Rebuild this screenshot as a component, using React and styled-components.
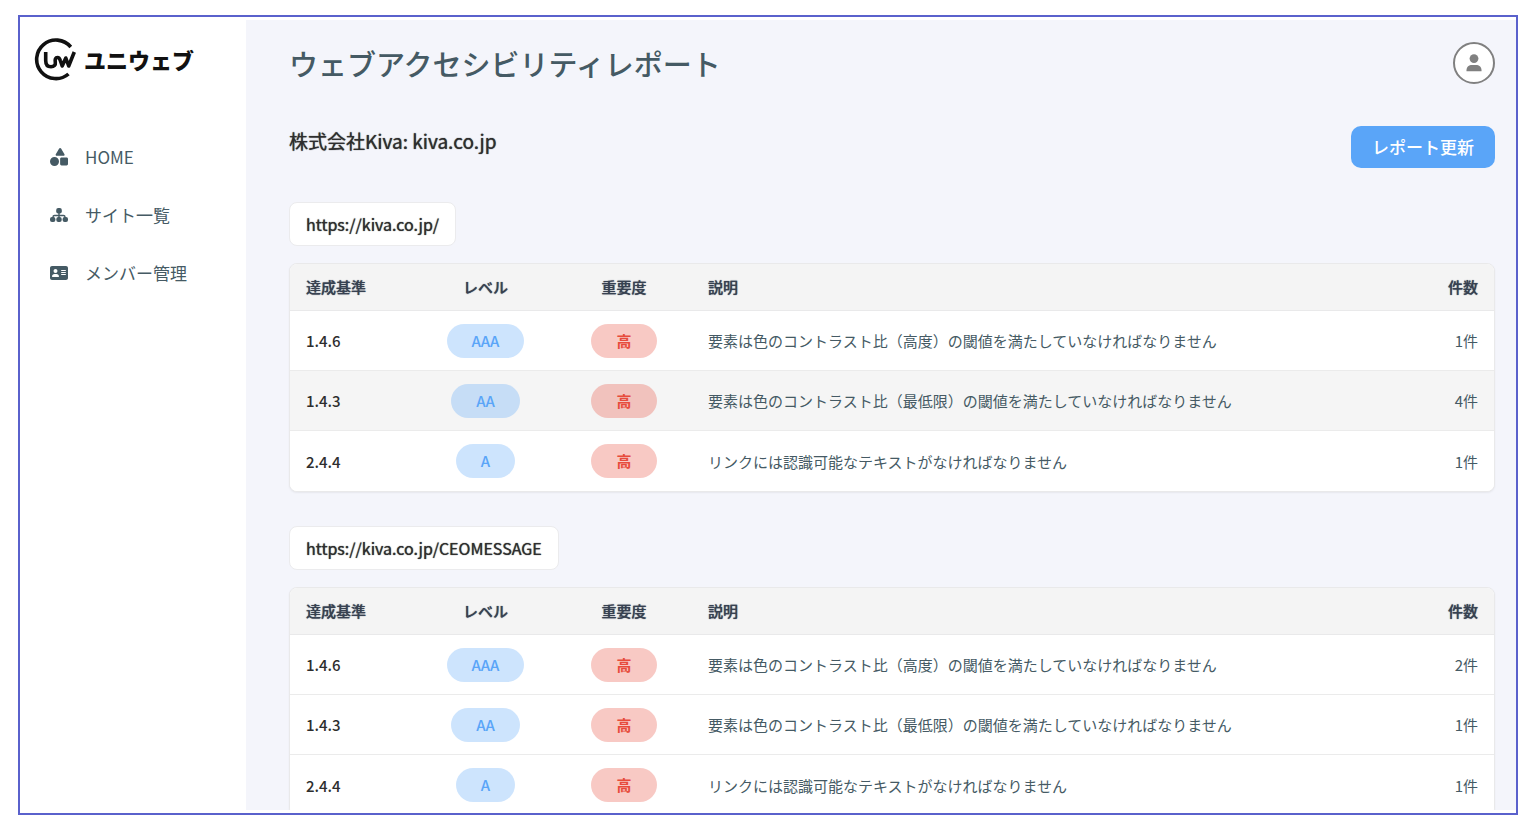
import React from 'react';
import styled, { createGlobalStyle } from 'styled-components';
import { FaShapes, FaAddressCard } from 'react-icons/fa6';

const GlobalStyle = createGlobalStyle`
  * {
    box-sizing: border-box;
  }

  body {
    margin: 0;
    background: #fff;
    font-family: 'Noto Sans CJK JP', sans-serif;
    color: #2e2e2e;
  }
`;

const reports = [
  {
    url: 'https://kiva.co.jp/',
    rows: [
      { criterion: '1.4.6', level: 'AAA', severity: '高', text: '要素は色のコントラスト比（高度）の閾値を満たしていなければなりません', count: 1 },
      { criterion: '1.4.3', level: 'AA', severity: '高', text: '要素は色のコントラスト比（最低限）の閾値を満たしていなければなりません', count: 4, active: true },
      { criterion: '2.4.4', level: 'A', severity: '高', text: 'リンクには認識可能なテキストがなければなりません', count: 1 },
    ],
  },
  {
    url: 'https://kiva.co.jp/CEOMESSAGE',
    rows: [
      { criterion: '1.4.6', level: 'AAA', severity: '高', text: '要素は色のコントラスト比（高度）の閾値を満たしていなければなりません', count: 2 },
      { criterion: '1.4.3', level: 'AA', severity: '高', text: '要素は色のコントラスト比（最低限）の閾値を満たしていなければなりません', count: 1 },
      { criterion: '2.4.4', level: 'A', severity: '高', text: 'リンクには認識可能なテキストがなければなりません', count: 1 },
    ],
  },
];

const LogoMark = () => (
  <svg width="43" height="44" viewBox="0 0 43 44" fill="none" stroke="#111" strokeWidth="3.6" aria-hidden="true">
    <path d="M36.800 10A19.300 19.300 0 1 0 34.500 37" />
    <path
      d="M11.700 15v8.500C11.700 27.500 13.500 29.800 17 29.800c3 0 4.800-1.800 4.300-4.600-.5-3 .2-4.700 2.200-4.700 1.700 0 2.300 1.300 2.800 3l1.900 5.500 3.600-8 2.900 8L40.300 15"
      strokeLinejoin="round"
    />
  </svg>
);

const SitemapIcon = () => (
  <svg width="18" height="18" viewBox="0 0 18 18" fill="currentColor" aria-hidden="true">
    <rect x="6.200" y="2" width="5.600" height="5.400" rx="2" />
    <path d="M9 6v6M3 13V11Q3 9.500 4.500 9.500h9Q15 9.500 15 11V13" fill="none" stroke="currentColor" strokeWidth="1.400" />
    <rect x="0" y="11" width="5.400" height="5" rx="2" />
    <rect x="6.300" y="11" width="5.400" height="5" rx="2" />
    <rect x="12.600" y="11" width="5.400" height="5" rx="2" />
  </svg>
);

const UserIcon = () => (
  <svg width="16" height="18" viewBox="0 0 16 18" fill="#808080" aria-hidden="true">
    <circle cx="8" cy="4.600" r="4.400" />
    <path d="M.5 17.300v-1C.5 12.800 3 11 6 11h4c3 0 5.500 1.800 5.500 5.300v1z" />
  </svg>
);

const Report = ({ url, rows }) => (
  <Section>
    <UrlTag>{url}</UrlTag>
    <TableCard>
      <Table>
        <colgroup>
          <Col $width={125} />
          <Col $width={141} />
          <Col $width={136} />
          <col />
          <Col $width={100} />
        </colgroup>
        <thead>
          <tr>
            <Th>達成基準</Th>
            <Th $align="center">レベル</Th>
            <Th $align="center">重要度</Th>
            <Th>説明</Th>
            <Th $align="right">件数</Th>
          </tr>
        </thead>
        <tbody>
          {rows.map((row) => (
            <Row key={row.criterion} $active={row.active}>
              <Td $strong>{row.criterion}</Td>
              <Td $align="center">
                <Badge>{row.level}</Badge>
              </Td>
              <Td $align="center">
                <Badge $danger>{row.severity}</Badge>
              </Td>
              <Td>{row.text}</Td>
              <Td $align="right">{row.count}件</Td>
            </Row>
          ))}
        </tbody>
      </Table>
    </TableCard>
  </Section>
);

const App = () => (
  <Page>
    <GlobalStyle />
    <Frame>
      <Sidebar>
        <Logo href="#">
          <LogoMark />
          ユニウェブ
        </Logo>
        <Nav>
          <NavLink href="#">
            <FaShapes size={18} />
            HOME
          </NavLink>
          <NavLink href="#">
            <SitemapIcon />
            サイト一覧
          </NavLink>
          <NavLink href="#">
            <FaAddressCard size={18} />
            メンバー管理
          </NavLink>
        </Nav>
      </Sidebar>
      <Main>
        <Header>
          <Title>ウェブアクセシビリティレポート</Title>
          <Avatar type="button" aria-label="アカウント">
            <UserIcon />
          </Avatar>
        </Header>
        <SubHeader>
          <Company>株式会社Kiva: kiva.co.jp</Company>
          <UpdateButton type="button">レポート更新</UpdateButton>
        </SubHeader>
        {reports.map((report) => (
          <Report key={report.url} {...report} />
        ))}
      </Main>
    </Frame>
  </Page>
);

const Page = styled.div`
  display: flex;
  height: 100vh;
  padding: 15px 18px;
`;

const Frame = styled.div`
  display: flex;
  flex: 1;
  min-width: 0;
  padding: 3px 0;
  border: 2px solid #5a61cc;
`;

const Sidebar = styled.aside`
  flex: 0 0 226px;
  padding: 17px 14px;
`;

const Logo = styled.a`
  display: flex;
  align-items: center;
  gap: 7px;
  height: 44px;
  color: #111;
  font-size: 22px;
  font-weight: 900;
  line-height: 44px;
  text-decoration: none;
`;

const Nav = styled.nav`
  display: flex;
  flex-direction: column;
  gap: 30px;
  margin-top: 62px;
  padding-left: 16px;
`;

const NavLink = styled.a`
  display: flex;
  align-items: center;
  gap: 17px;
  color: #455a64;
  font-size: 17px;
  line-height: 28px;
  text-decoration: none;
`;

const Main = styled.main`
  flex: 1;
  min-width: 0;
  overflow: hidden;
  padding: 22px 21px 0 43px;
  background: #f4f5fb;
`;

const Header = styled.header`
  display: flex;
  align-items: center;
  justify-content: space-between;
`;

const Title = styled.h1`
  margin: 0;
  color: #455a64;
  font-size: 29px;
  font-weight: 500;
  line-height: 42px;
`;

const Avatar = styled.button`
  display: flex;
  align-items: center;
  justify-content: center;
  width: 42px;
  height: 42px;
  padding: 0;
  border: 2px solid #808080;
  border-radius: 50%;
  background: #fff;
`;

const SubHeader = styled.div`
  display: flex;
  align-items: flex-start;
  justify-content: space-between;
  margin: 42px 0 34px;
`;

const Company = styled.h2`
  margin: 0;
  font-size: 19px;
  font-weight: 400;
  line-height: 30px;
  text-shadow: 0 0 1px currentColor;
`;

const UpdateButton = styled.button`
  height: 42px;
  padding: 0 21px 2px;
  border: 0;
  border-radius: 10px;
  background: #5aa5f8;
  color: #fff;
  font-family: inherit;
  font-size: 17px;
  font-weight: 500;
`;

const Section = styled.section`
  margin-bottom: 34px;
`;

const UrlTag = styled.h3`
  width: fit-content;
  margin: 0 0 17px;
  padding: 1px 16px 0;
  border: 1px solid #ebebed;
  border-radius: 8px;
  background: #fff;
  font-size: 16px;
  font-weight: 400;
  line-height: 41px;
  text-shadow: 0 0 1px currentColor;
`;

const TableCard = styled.div`
  overflow: hidden;
  border: 1px solid #e9e9ea;
  border-radius: 8px;
  background: #fff;
  box-shadow: 0 1px 2px rgba(0, 0, 0, 0.06);
`;

const Table = styled.table`
  width: 100%;
  table-layout: fixed;
  border-spacing: 0;
  font-size: 15px;
`;

const Col = styled.col`
  width: ${({ $width }) => $width}px;
`;

const Th = styled.th`
  height: 47px;
  padding: 0 16px 2px;
  border-bottom: 1px solid #e9e9ea;
  background: #f4f4f4;
  color: #374151;
  font-weight: 500;
  text-align: ${({ $align }) => $align || 'left'};
  text-shadow: 0 0 1px currentColor;
`;

const Td = styled.td`
  height: 60px;
  padding: 0 16px;
  color: ${({ $strong }) => ($strong ? '#2e2e2e' : '#455a64')};
  font-weight: ${({ $strong }) => ($strong ? 500 : 400)};
  text-align: ${({ $align }) => $align || 'left'};
`;

const Row = styled.tr`
  background: ${({ $active }) => ($active ? '#f5f5f5' : '#fff')};

  &:not(:last-child) ${Td} {
    border-bottom: 1px solid #ebebeb;
  }
`;

const Badge = styled.span`
  display: inline-block;
  padding: 0 25px;
  border-radius: 17px;
  background: ${({ $danger }) => ($danger ? 'rgba(231, 76, 60, 0.3)' : 'rgba(90, 165, 248, 0.3)')};
  color: ${({ $danger }) => ($danger ? '#e74c3c' : '#5aa5f8')};
  font-weight: ${({ $danger }) => ($danger ? 700 : 500)};
  line-height: 34px;
`;

export default App;
